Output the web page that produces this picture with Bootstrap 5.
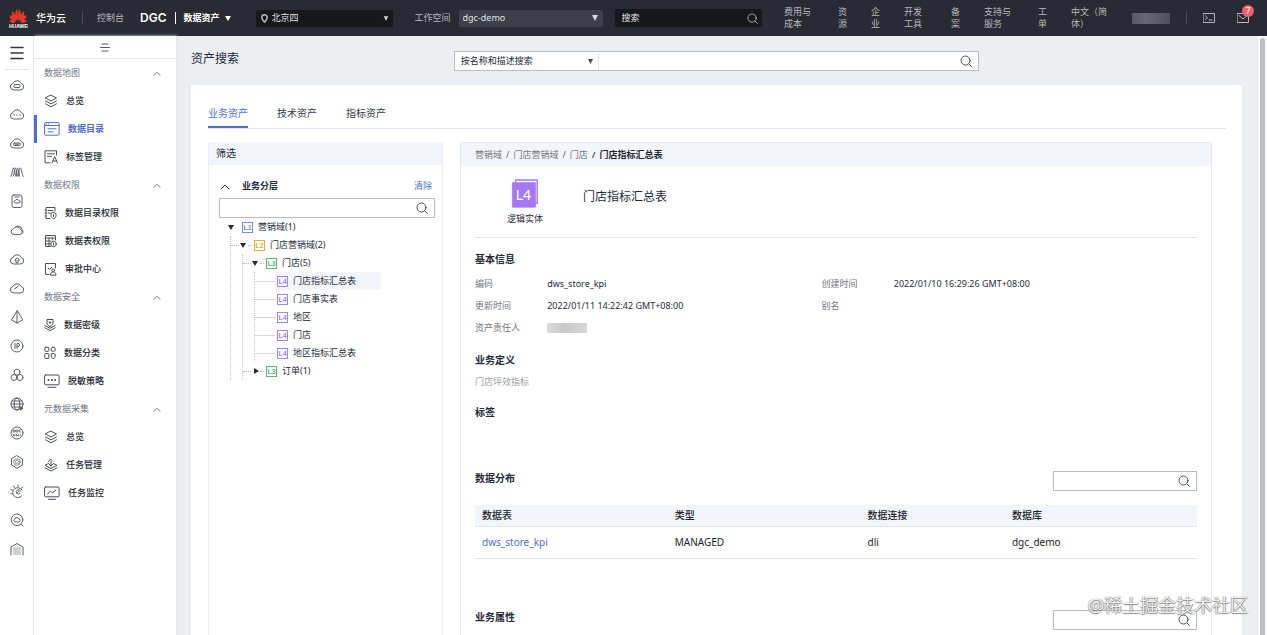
<!DOCTYPE html>
<html lang="zh-CN">
<head>
<meta charset="utf-8">
<meta name="viewport" content="width=device-width, initial-scale=1">
<title>资产搜索 - DGC 数据资产</title>
<link href="https://cdn.jsdelivr.net/npm/bootstrap@5.3.0/dist/css/bootstrap.min.css" rel="stylesheet">
<style>
:root{--ink:#252b3a;--muted:#71757f;--blue:#526ecc;--line:#e3e5e9;--band:#f2f5fc}
body{font-family:"Noto Sans","Noto Sans CJK SC",sans-serif;font-size:9px;line-height:12px;color:var(--ink);background:#eceff2}
a{color:inherit;text-decoration:none}
ul{list-style:none;margin:0;padding:0}
svg{fill:none;stroke:currentColor;stroke-width:1;stroke-linecap:round;stroke-linejoin:round;flex:none;display:block}
button{color:inherit;background:none;border:0;padding:0}
.caret-down,.caret-right{flex:none;width:8px;height:8px}
.caret-down::before,.caret-right::before{content:"";display:block;margin:2px 1px;border:3px solid transparent;border-top:5px solid currentColor;border-bottom:0}
.caret-right::before{margin:1px 3px;border:3px solid transparent;border-left:5px solid currentColor;border-right:0}

.topbar{height:36px;background:#282b33;color:#b5b8bf;line-height:12px}
.topbar .brand{font-size:10px;font-weight:500;color:#fff;margin-left:8px;white-space:nowrap}
.topbar .product{font-family:"Inter","Noto Sans",sans-serif;font-size:12px;font-weight:600;color:#fff}
.vline{width:1px;height:12px;background:#4a4d55}
.form-select{font-size:9px;line-height:12px;border-radius:2px;border:0;padding:2px 20px 3px 4px;color:#dfe1e6;background:#3d3f4a url("data:image/svg+xml,%3Csvg xmlns='http://www.w3.org/2000/svg' viewBox='0 0 8 6'%3E%3Cpath fill='%23d5d7dc' d='M1 0h6L4 6z'/%3E%3C/svg%3E") no-repeat right 4px center/8px 6px}
.region{width:137px;background:#17181b;border-radius:2px;padding-left:5px}
.region .form-select{background-color:#17181b;background-size:6px 5px}
.workspace{width:144px}
.topsearch{background:#17181b;border-radius:2px;height:18px;padding:0 4px 0 7px}
.plain-input{border:0;background:transparent;outline:0;color:inherit;min-width:0;width:0;flex:1;padding:0}
.topsearch input::placeholder{color:#dfe1e6;opacity:1}
.toplinks a{flex:none}
.w-one{width:10px}.w-two{width:19px}.w-three{width:28px}.w-four{width:38px}
.redacted{height:11px;background:linear-gradient(90deg,#555761,#686a73 35%,#4c4e58)}
.count{position:absolute;left:5px;top:-8px;width:12px;height:12px;border-radius:50%;background:#ef6068;color:#fff;text-align:center}

.shell{height:calc(100vh - 36px)}
.rail{width:34px;background:#fff;border-right:1px solid #e4e6ea;color:#5d616b;padding-top:8px}
.rail .burger{height:26px;border-bottom:1px solid var(--line);width:24px;color:#33363e}
.rail nav{gap:15px;padding-top:8px}
.sidenav{width:142px;background:#fff;box-shadow:1px 0 3px #dfe2e7}
.fold{height:23px;border-bottom:1px solid var(--line);color:#565a64}
.sidenav .group,.sidenav .item{height:28px;display:flex;align-items:center;width:100%}
.sidenav .group{color:var(--muted);justify-content:space-between;padding:0 15px 0 10px}
.sidenav .item{gap:8px;padding-left:10px;font-weight:500;color:#252831}
.sidenav .item svg{color:#4b4f59}
.sidenav .active{border-left:3px solid var(--blue);padding-left:7px;color:var(--blue);font-weight:700}
.sidenav .active svg{color:var(--blue)}

.page{padding:15px 16px 0 15px}
.titlebar{display:grid;grid-template-columns:25% 50% 25%;margin-bottom:14px}
.titlebar h1{font-size:12px;line-height:16px;font-weight:400;margin:0}
.boxed{border:1px solid #b8bbc2;background:#fff;height:20px;padding-right:6px;color:#4c505a}
.boxed input{padding-left:6px}
.titlebar .form-select{width:144px;color:var(--ink);padding-left:6px;background-color:#fff;background-image:url("data:image/svg+xml,%3Csvg xmlns='http://www.w3.org/2000/svg' viewBox='0 0 8 6'%3E%3Cpath fill='%23444851' d='M1 0h6L4 6z'/%3E%3C/svg%3E");background-size:7px 5px;border-right:1px solid var(--line);border-radius:0}
.sheet{background:#fff;padding:15px 16px 0 17px;box-shadow:0 0 3px #e1e4e9}
.tabs{border-bottom:1px solid var(--line);gap:29px;font-size:10px;line-height:26px;margin-bottom:13px}
.tabs button{border-bottom:2px solid transparent;color:#363b48}
.tabs .active{border-color:var(--blue);color:var(--blue)}
.filter{width:235px;border:1px solid #eceef2;border-width:0 1px}
.detail{border:1px solid #e7e9ee;border-width:1px 1px 0;margin-right:14px}
.band{background:var(--band)}
.filter .band{height:23px;line-height:23px;font-size:10px;padding-left:7px;margin-bottom:15px}
.filter .inner{padding:0 7px 0 10px}
.filter .layer{height:12px;margin-bottom:6px;padding:0 3px 0 1px}
.filter .layer svg{margin-right:12px}
.link-blue{color:var(--blue)}
.tree{padding-left:8px}
.tree ul{margin-left:3px;border-left:1px dotted #c3c6cc}
.tree ul ul{margin-left:11px}
.tree .node{height:18px;display:flex;align-items:center}
.tree .stub{flex:none;height:1px;border-top:1px dotted #b9bcc3;width:8px}
.tree .stub.long{width:20px;border-top-style:solid;border-color:#d5d7db}
.tree .gap{flex:none;width:7px;padding-left:1px}
.tree .gap.dots::before{content:"";display:block;border-top:1px dotted #b9bcc3;width:4px}
.level{flex:none;width:11px;height:11px;border:1px solid;font:7px/9px "Liberation Sans",sans-serif;font-weight:700;text-align:center;margin-right:5px}
.l-one{color:#7d8be0}.l-two{color:#f0ac3a}.l-three{color:#55b97c}.l-four{color:#a184ea}
.leaf{display:flex;align-items:center;height:18px;padding-left:2px;min-width:106px}
.leaf.active{background:var(--band)}

.crumbs{height:23px;padding:0 14px;color:var(--muted);font-size:9px;margin:0;--bs-breadcrumb-item-padding-x:4px}
.detail .body{padding:0 14px}
.entity{height:72px;border-bottom:1px solid var(--line);padding-top:13px;gap:40px}
.entity h2{font-size:12px;font-weight:400;line-height:18px;margin:9px 0 0}
.entity .kind{width:36px;margin-left:32px}
.l4text{font:15px "Noto Sans",sans-serif;fill:#fff;stroke:none}
h3{font-size:10px;line-height:14px;font-weight:700;margin:0}
.facts{display:grid;grid-template-columns:10% 38% 10% 42%;line-height:22px;margin:7px 0 14px}
.facts dt{font-weight:400;color:var(--muted)}
.facts dd{margin:0}
.facts .blurred{width:40px;height:10px;margin-top:6px;background:linear-gradient(90deg,#ddd,#c9c9cb 40%,#d8d8d9)}
.tablehead{height:20px;padding-top:1px}
.boxed.short{width:144px}
.assets{--bs-table-bg:transparent;font-size:10px;table-layout:fixed;margin:15px 0 50px}
.assets th{background:var(--band);height:21px;line-height:20px;padding:0 7px;font-weight:500;border-color:var(--line);vertical-align:middle}
.assets td{height:32px;padding:0 7px;border-color:var(--line)}
.scroller{width:9px;background:#f7f8fa;padding:2px 2px 0}
.scroller div{background:#bfc0c3;border-radius:3px 3px 0 0}
.watermark{position:absolute;right:19px;bottom:18px;font-size:18px;line-height:24px;font-weight:300;color:#fff;text-shadow:1px 0 1px #777,0 1px 1px #777,-1px 0 1px #aaa;pointer-events:none}
</style>
</head>
<body class="vh-100 overflow-hidden position-relative">
<svg class="d-none">
  <symbol id="search" viewBox="0 0 12 12"><circle cx="5.500" cy="5.500" r="4.500"/><path d="m9 9 2.300 2.300"/></symbol>
  <symbol id="up" viewBox="0 0 8 5"><path d="m1 4.300 3-3 3 3"/></symbol>
  <symbol id="cloud" viewBox="0 0 14 14"><path d="M3.500 12a3.300 3.300 0 0 1-.6-6.500 4.500 4.500 0 0 1 8.300 0 3.300 3.300 0 0 1-.7 6.500z"/></symbol>
  <symbol id="layers" viewBox="0 0 14 14"><path d="m7 1.200 5.500 2.900L7 7 1.500 4.100zM1.500 7 7 9.900 12.500 7M1.500 9.800 7 12.700l5.500-2.900"/></symbol>
</svg>

<header class="topbar d-flex align-items-center">
  <a href="#" class="brand d-flex align-items-center gap-2" aria-label="华为云">
    <svg width="20" height="20" viewBox="0 0 20 20" stroke="none">
      <g fill="#e8362d" stroke="none"><path d="M9.500 13C7 9 6.300 5 8.600 1.200c1.400.8 1.700 6.200.9 11.800zM10.500 13c2.500-4 3.200-8 .9-11.800-1.400.8-1.700 6.200-.9 11.800zM8.600 13.200C5 10.800 3 7.500 4.200 3.600c2 .3 4.200 5 4.400 9.600zM11.400 13.200c3.600-2.400 5.600-5.700 4.400-9.600-2 .3-4.200 5-4.400 9.600zM7.900 13.800C3.800 13 1.300 10.400 1.700 7c2 0 5.200 3.500 6.200 6.800zM12.100 13.800c4.100-.8 6.600-3.400 6.200-6.800-2 0-5.200 3.500-6.200 6.800zM7.500 14.600c-3 .9-5.500.1-6.200-2.500 2-.6 4.800.9 6.200 2.500zM12.500 14.600c3 .9 5.500.1 6.200-2.500-2-.6-4.800.9-6.200 2.500z"/></g>
      <text x="1" y="19.500" font-family="Liberation Sans" font-weight="700" font-size="5" fill="#fff" stroke="none">HUAWEI</text>
    </svg>
    <span>华为云</span>
  </a>
  <span class="vline" style="margin-left:16px"></span>
  <a href="#" class="text-nowrap" style="margin-left:14px">控制台</a>
  <a href="#" class="product ms-3">DGC</a>
  <span class="vline bg-light ms-2"></span>
  <button class="d-flex align-items-center gap-1 ms-2 text-white text-nowrap fw-bold">数据资产 <span class="caret-down"></span></button>
  <label class="region d-flex align-items-center ms-4" aria-label="区域">
    <svg width="7" height="9" viewBox="0 0 7 9" stroke-width="1.500"><path stroke-width="1.500" d="M3.500 8.300C1.500 6 .8 4.700.8 3.500a2.700 2.700 0 0 1 5.400 0c0 1.200-.7 2.500-2.700 4.800z"/></svg>
    <select class="form-select"><option>北京四</option></select>
  </label>
  <label for="ws" class="text-nowrap" style="margin-left:22px">工作空间</label>
  <select id="ws" class="form-select workspace ms-2"><option>dgc-demo</option></select>
  <form class="topsearch d-flex align-items-center flex-fill" style="margin-left:12px;margin-right:22px">
    <input class="plain-input" placeholder="搜索" aria-label="搜索"><button type="button" aria-label="提交搜索"><svg width="11" height="11"><use href="#search"/></svg></button>
  </form>
  <nav class="toplinks d-flex align-items-center">
    <a href="#" class="w-three" style="margin-right:26px">费用与成本</a>
    <a href="#" class="w-one" style="margin-right:23px">资源</a>
    <a href="#" class="w-one" style="margin-right:23px">企业</a>
    <a href="#" class="w-two" style="margin-right:28px">开发工具</a>
    <a href="#" class="w-one" style="margin-right:23px">备案</a>
    <a href="#" class="w-three" style="margin-right:26px">支持与服务</a>
    <a href="#" class="w-one" style="margin-right:23px">工单</a>
    <a href="#" class="w-four">中文（简体）</a>
  </nav>
  <span class="redacted w-four" style="margin-left:23px"></span>
  <span class="vline" style="margin:0 16px"></span>
  <button aria-label="命令行"><svg width="12" height="10" viewBox="0 0 12 10"><path d="M.5.5h11v9H.5zM2.500 3l2 1.700-2 1.800M6 7h3"/></svg></button>
  <button class="position-relative" style="margin:0 18px 0 22px" aria-label="消息"><svg width="12" height="10" viewBox="0 0 12 10"><path d="M.5.5h11v9H.5zM2 2.500l4 3.500 4-3.500"/></svg><span class="count">7</span></button>
</header>

<div class="shell d-flex">
  <aside class="rail d-flex flex-column align-items-center flex-shrink-0">
    <button class="burger" aria-label="菜单"><svg width="14" height="14" class="mx-auto mb-2" viewBox="0 0 14 14"><path d="M1 1.500h12M1 7h12M1 12.500h12" stroke-width="1.500"/></svg></button>
    <nav class="d-flex flex-column">
      <a href="#" aria-label="云服务器"><svg width="14" height="14"><use href="#cloud"/><rect x="4" y="6.500" width="6" height="3" rx="1"/></svg></a>
      <a href="#" aria-label="弹性云"><svg width="14" height="14"><use href="#cloud"/><path d="M4 8h.1M7 8h.1M10 8h.1" stroke-width="1.300"/></svg></a>
      <a href="#" aria-label="裸金属"><svg width="14" height="14"><use href="#cloud"/><rect x="3.500" y="7" width="7" height="2.500" rx="1"/><path d="M5 8.200h4"/></svg></a>
      <a href="#" aria-label="伸缩"><svg width="14" height="14" viewBox="0 0 14 14"><path d="M.8 11.500C2.500 11 2 3 3.500 3S5 11.500 6 11.500 6.500 3 7.700 3s1 8.500 2 8.500M3 11.500c1.500 0 1-8.500 2.300-8.500S7 11.500 8 11.500 8.500 3 10.300 3s1.200 7 3 8.500"/></svg></a>
      <a href="#" aria-label="存储"><svg width="14" height="14" viewBox="0 0 14 14"><rect x="2" y="1" width="10" height="12.500" rx="2"/><path d="M5.200 9a1.200 1.200 0 0 1 0-2.400 2 2 0 0 1 3.700 0A1.200 1.200 0 0 1 9 9zM5 3h4"/></svg></a>
      <a href="#" aria-label="私有云"><svg width="14" height="14" viewBox="0 0 14 14"><path d="M3.500 11.500a2.800 2.800 0 0 1-.2-5.500 4 4 0 0 1 7.300.5 2.600 2.600 0 0 1-.4 5zM6 3.500a4 4 0 0 1 6 3c1.200 1 1.500 3 .2 4"/></svg></a>
      <a href="#" aria-label="上传"><svg width="14" height="14"><use href="#cloud"/><path d="M7 6 4.800 8.200H6v2.500h2V8.200h1.200z"/></svg></a>
      <a href="#" aria-label="监控"><svg width="14" height="14"><use href="#cloud"/><path d="m4.500 8 4-3"/></svg></a>
      <a href="#" aria-label="网络"><svg width="14" height="14" viewBox="0 0 14 14"><path d="M7 1 1.500 10 7 13l5.500-3zM7 1v12"/></svg></a>
      <a href="#" aria-label="弹性IP"><svg width="14" height="14" viewBox="0 0 14 14"><circle cx="7" cy="7" r="6"/><path d="M5 4.500v5M7 9.500v-5h1a1.500 1.500 0 0 1 0 3H7"/></svg></a>
      <a href="#" aria-label="集群"><svg width="14" height="14" viewBox="0 0 14 14"><circle cx="7" cy="4.200" r="3"/><circle cx="4" cy="9.500" r="3"/><circle cx="10" cy="9.500" r="3"/></svg></a>
      <a href="#" aria-label="域名"><svg width="14" height="14" viewBox="0 0 14 14"><circle cx="7" cy="7" r="6"/><ellipse cx="7" cy="7" rx="2.800" ry="6"/><path d="M1 7h12M2 4h10M2 10h10"/><path d="m10 10 3 1-2 2z" fill="currentColor"/></svg></a>
      <a href="#" aria-label="数据仓库"><svg width="14" height="14" viewBox="0 0 14 14"><circle cx="7" cy="7" r="6"/><path d="M3.500 4h1.500v2H3.500zM6.200 4h1.500v2H6.200zM10.500 4H9v2h1.500M3.500 8.500v1.500h1.500V8.500M6.500 10V8.500l1 1 1-1V10M10.300 8.500v1.500" stroke-width=".8"/></svg></a>
      <a href="#" aria-label="云桌面"><svg width="14" height="14" viewBox="0 0 14 14"><path d="M7 .8 12.500 4v6L7 13.200 1.500 10V4z"/><circle cx="7" cy="7" r="3.300" stroke-width=".7"/><path stroke-width=".7" d="M5.300 8a1 1 0 0 1 .3-1.800 1.500 1.500 0 0 1 2.800 0A1 1 0 0 1 8.700 8z"/></svg></a>
      <a href="#" aria-label="智能湖"><svg width="14" height="14" viewBox="0 0 14 14"><path d="M11.500 12A5 5 0 1 1 12 6M10 9.500a2.200 2.200 0 1 1 .5-2.500M6.500 9c2 0 1-2 3-2M8 .8v1.700M3.500 2l1 1.500M.8 5.500l1.800.6M13 3l-1.500 1.300M1 10l1.500-.5"/></svg></a>
      <a href="#" aria-label="云搜索"><svg width="14" height="14" viewBox="0 0 14 14"><circle cx="7" cy="6.800" r="5.800"/><path d="m11 11 2 2M4.800 8.800a1.400 1.400 0 0 1 0-2.700 2.300 2.300 0 0 1 4.300 0 1.400 1.400 0 0 1 .2 2.700z"/></svg></a>
      <a href="#" aria-label="数据湖"><svg width="14" height="14" viewBox="0 0 14 14"><path d="M1 13V5L7 1.500 13 5v8"/><path d="M3.500 6h7M3.500 8h7M3.500 10h7M3.500 12h7" stroke="#9da0a7"/></svg></a>
    </nav>
  </aside>

  <nav class="sidenav flex-shrink-0">
    <button class="fold w-100 d-flex align-items-center justify-content-center" aria-label="收起导航"><svg width="10" height="9" viewBox="0 0 10 9"><path d="M2 1h6M.5 4.500h9M2 8h6"/></svg></button>
    <button class="group">数据地图<svg width="8" height="5"><use href="#up"/></svg></button>
    <a href="#" class="item"><svg width="14" height="14"><use href="#layers"/></svg>总览</a>
    <a href="#" class="item active"><svg width="16" height="14" viewBox="0 0 16 14"><rect x=".6" y=".6" width="14.500" height="12.600" rx="1"/><path d="M.6 3.500h14.500M2.500 2h.1M4.500 2h.1M4 6.800h8M4 9.800h5"/></svg>数据目录</a>
    <a href="#" class="item"><svg width="14" height="14" viewBox="0 0 14 14"><path d="M12.500 5V.8H1v12h5M3.500 3.800h7M3.500 6.300h4M8 13l2.700-6.500L13.400 13M9 11h3.500"/></svg>标签管理</a>
    <button class="group">数据权限<svg width="8" height="5"><use href="#up"/></svg></button>
    <a href="#" class="item"><svg width="13" height="14" viewBox="0 0 13 14"><path d="M11 5V1.500H2v11h4M4 4.500h5M4 7h2M1 4h1M1 7h1M1 10h1M9.500 6.500 12 7.500v2.300c0 1.400-1 2.200-2.500 2.900C8 12 7 11.200 7 9.800V7.500zM9.500 8.500v2"/></svg>数据目录权限</a>
    <a href="#" class="item"><svg width="13" height="14" viewBox="0 0 13 14"><path d="M11.500 6V1.500h-10v11h5M1.500 4h10M1.500 7h5M1.500 10h5M5 4v8.500M8.300 4v2"/><circle cx="9.500" cy="10" r="2.800"/><path d="M9.500 9v2"/></svg>数据表权限</a>
    <a href="#" class="item"><svg width="13" height="14" viewBox="0 0 13 14"><path d="M11.500 6V1.500h-10v11H5M4 6l1.500 1.500L8 5"/><circle cx="9.200" cy="8.300" r="1.400"/><path d="M6.500 12.800c0-2 1-2.800 2.700-2.800s2.700.8 2.700 2.800z"/></svg>审批中心</a>
    <button class="group">数据安全<svg width="8" height="5"><use href="#up"/></svg></button>
    <a href="#" class="item"><svg width="12" height="14" viewBox="0 0 12 14"><path d="M6 8.500c-2-.8-3-1.700-3-3.500V1.500h6V5c0 1.800-1 2.700-3 3.500zM5 4.200h2M6 4.200v1.500M.8 7.500 6 10.300l5.200-2.800M.8 9.800 6 12.600l5.200-2.800"/></svg>数据密级</a>
    <a href="#" class="item"><svg width="12" height="14" viewBox="0 0 12 14"><rect x=".8" y="1.300" width="4" height="4" rx=".8"/><rect x="7.200" y="1.300" width="4" height="4" rx="1.500"/><rect x=".8" y="7.500" width="4" height="5" rx=".8"/><path d="m9.200 7.500 2 .7v2c0 1.200-.7 1.800-2 2.400-1.300-.6-2-1.200-2-2.400v-2z"/></svg>数据分类</a>
    <a href="#" class="item"><svg width="16" height="14" viewBox="0 0 16 14"><rect x=".6" y="1" width="14.500" height="9.800" rx="1"/><path d="M4 13.300h8"/><path d="M4.500 6h.1M7.800 6h.1M11 6h.1" stroke-width="2"/></svg>脱敏策略</a>
    <button class="group">元数据采集<svg width="8" height="5"><use href="#up"/></svg></button>
    <a href="#" class="item"><svg width="14" height="14"><use href="#layers"/></svg>总览</a>
    <a href="#" class="item"><svg width="14" height="14" viewBox="0 0 14 14"><path d="M4.500 5.500 1 7.300 7 10.500l6-3.200-3.500-1.800M1 9.800 7 13l6-3.200M7 8V3.500M5 6l2 2 2-2M4.500 3.500 6.500 1l2 2"/></svg>任务管理</a>
    <a href="#" class="item"><svg width="16" height="14" viewBox="0 0 16 14"><rect x=".6" y="1" width="14.500" height="9.800" rx="1"/><path d="M4.500 13.300h7M3.500 8 6.500 5l2 2L12 4"/></svg>任务监控</a>
  </nav>

  <main class="page flex-fill overflow-hidden">
    <div class="titlebar">
      <h1>资产搜索</h1>
      <form class="boxed d-flex align-items-center">
        <select class="form-select" aria-label="搜索范围"><option>按名称和描述搜索</option></select>
        <input class="plain-input" aria-label="搜索资产"><button type="button" aria-label="搜索"><svg width="12" height="12"><use href="#search"/></svg></button>
      </form>
    </div>
    <div class="sheet">
      <div class="tabs d-flex" role="tablist">
        <button role="tab" class="active" aria-selected="true">业务资产</button>
        <button role="tab">技术资产</button>
        <button role="tab">指标资产</button>
      </div>
      <div class="d-flex" style="gap:17px">
        <section class="filter vh-100 flex-shrink-0">
          <div class="band">筛选</div>
          <div class="inner">
            <div class="layer d-flex align-items-center">
              <svg width="10" height="7" viewBox="0 0 10 7"><path d="m1 6 4-4 4 4"/></svg>
              <strong>业务分层</strong><a href="#" class="link-blue ms-auto">清除</a>
            </div>
            <form class="boxed d-flex align-items-center"><input class="plain-input" aria-label="筛选业务分层"><button type="button" aria-label="搜索"><svg width="12" height="12"><use href="#search"/></svg></button></form>
            <ul class="tree">
              <li>
                <div class="node"><span class="caret-down"></span><span class="gap"></span><span class="level l-one">L1</span>营销域(1)</div>
                <ul><li>
                  <div class="node"><span class="stub"></span><span class="caret-down"></span><span class="gap dots"></span><span class="level l-two">L2</span>门店营销域(2)</div>
                  <ul>
                    <li>
                      <div class="node"><span class="stub"></span><span class="caret-down"></span><span class="gap dots"></span><span class="level l-three">L3</span>门店(5)</div>
                      <ul>
                        <li class="node"><span class="stub long"></span><a href="#" class="leaf active"><span class="level l-four">L4</span>门店指标汇总表</a></li>
                        <li class="node"><span class="stub long"></span><a href="#" class="leaf"><span class="level l-four">L4</span>门店事实表</a></li>
                        <li class="node"><span class="stub long"></span><a href="#" class="leaf"><span class="level l-four">L4</span>地区</a></li>
                        <li class="node"><span class="stub long"></span><a href="#" class="leaf"><span class="level l-four">L4</span>门店</a></li>
                        <li class="node"><span class="stub long"></span><a href="#" class="leaf"><span class="level l-four">L4</span>地区指标汇总表</a></li>
                      </ul>
                    </li>
                    <li class="node"><span class="stub"></span><span class="caret-right"></span><span class="gap dots"></span><span class="level l-three">L3</span>订单(1)</li>
                  </ul>
                </li></ul>
              </li>
            </ul>
          </div>
        </section>

        <section class="detail flex-fill">
          <ol class="breadcrumb band crumbs align-items-center">
            <li class="breadcrumb-item"><a href="#">营销域</a></li>
            <li class="breadcrumb-item"><a href="#">门店营销域</a></li>
            <li class="breadcrumb-item"><a href="#">门店</a></li>
            <li class="breadcrumb-item fw-bold text-dark">门店指标汇总表</li>
          </ol>
          <div class="body">
            <div class="entity d-flex">
              <div class="kind text-center">
                <svg width="30" height="30" class="mx-auto mb-1" viewBox="0 0 30 32"><path d="M5 3V1h23v25h-2" stroke="#a678f1" stroke-width="1.500"/><path d="M2 4h24v26H2z" fill="#a678f1" stroke="#a678f1"/><text x="5" y="22" class="l4text">L4</text></svg>
                逻辑实体
              </div>
              <h2>门店指标汇总表</h2>
            </div>
            <h3 style="margin-top:14px">基本信息</h3>
            <dl class="facts">
              <dt>编码</dt><dd>dws_store_kpi</dd><dt>创建时间</dt><dd>2022/01/10 16:29:26 GMT+08:00</dd>
              <dt>更新时间</dt><dd>2022/01/11 14:22:42 GMT+08:00</dd><dt>别名</dt><dd></dd>
              <dt>资产责任人</dt><dd class="blurred"></dd>
            </dl>
            <h3>业务定义</h3>
            <p class="mb-0" style="color:#9a9da5;line-height:30px">门店坪效指标</p>
            <h3 style="margin:8px 0 51px">标签</h3>
            <div class="tablehead d-flex justify-content-between">
              <h3>数据分布</h3>
              <form class="boxed short d-flex align-items-center"><input class="plain-input" aria-label="搜索数据分布"><button type="button" aria-label="搜索"><svg width="12" height="12"><use href="#search"/></svg></button></form>
            </div>
            <table class="table assets">
              <colgroup><col style="width:26.700%"><col style="width:26.700%"><col style="width:20%"><col></colgroup>
              <thead><tr><th>数据表</th><th>类型</th><th>数据连接</th><th>数据库</th></tr></thead>
              <tbody><tr class="align-middle"><td><a href="#" class="link-blue">dws_store_kpi</a></td><td>MANAGED</td><td>dli</td><td>dgc_demo</td></tr></tbody>
            </table>
            <div class="tablehead d-flex justify-content-between">
              <h3>业务属性</h3>
              <form class="boxed short d-flex align-items-center"><input class="plain-input" aria-label="搜索业务属性"><button type="button" aria-label="搜索"><svg width="12" height="12"><use href="#search"/></svg></button></form>
            </div>
          </div>
        </section>
      </div>
    </div>
  </main>
  <div class="scroller flex-shrink-0"><div class="h-100"></div></div>
</div>
<div class="watermark">@稀土掘金技术社区</div>
<script src="https://cdn.jsdelivr.net/npm/bootstrap@5.3.0/dist/js/bootstrap.bundle.min.js"></script>
</body>
</html>
